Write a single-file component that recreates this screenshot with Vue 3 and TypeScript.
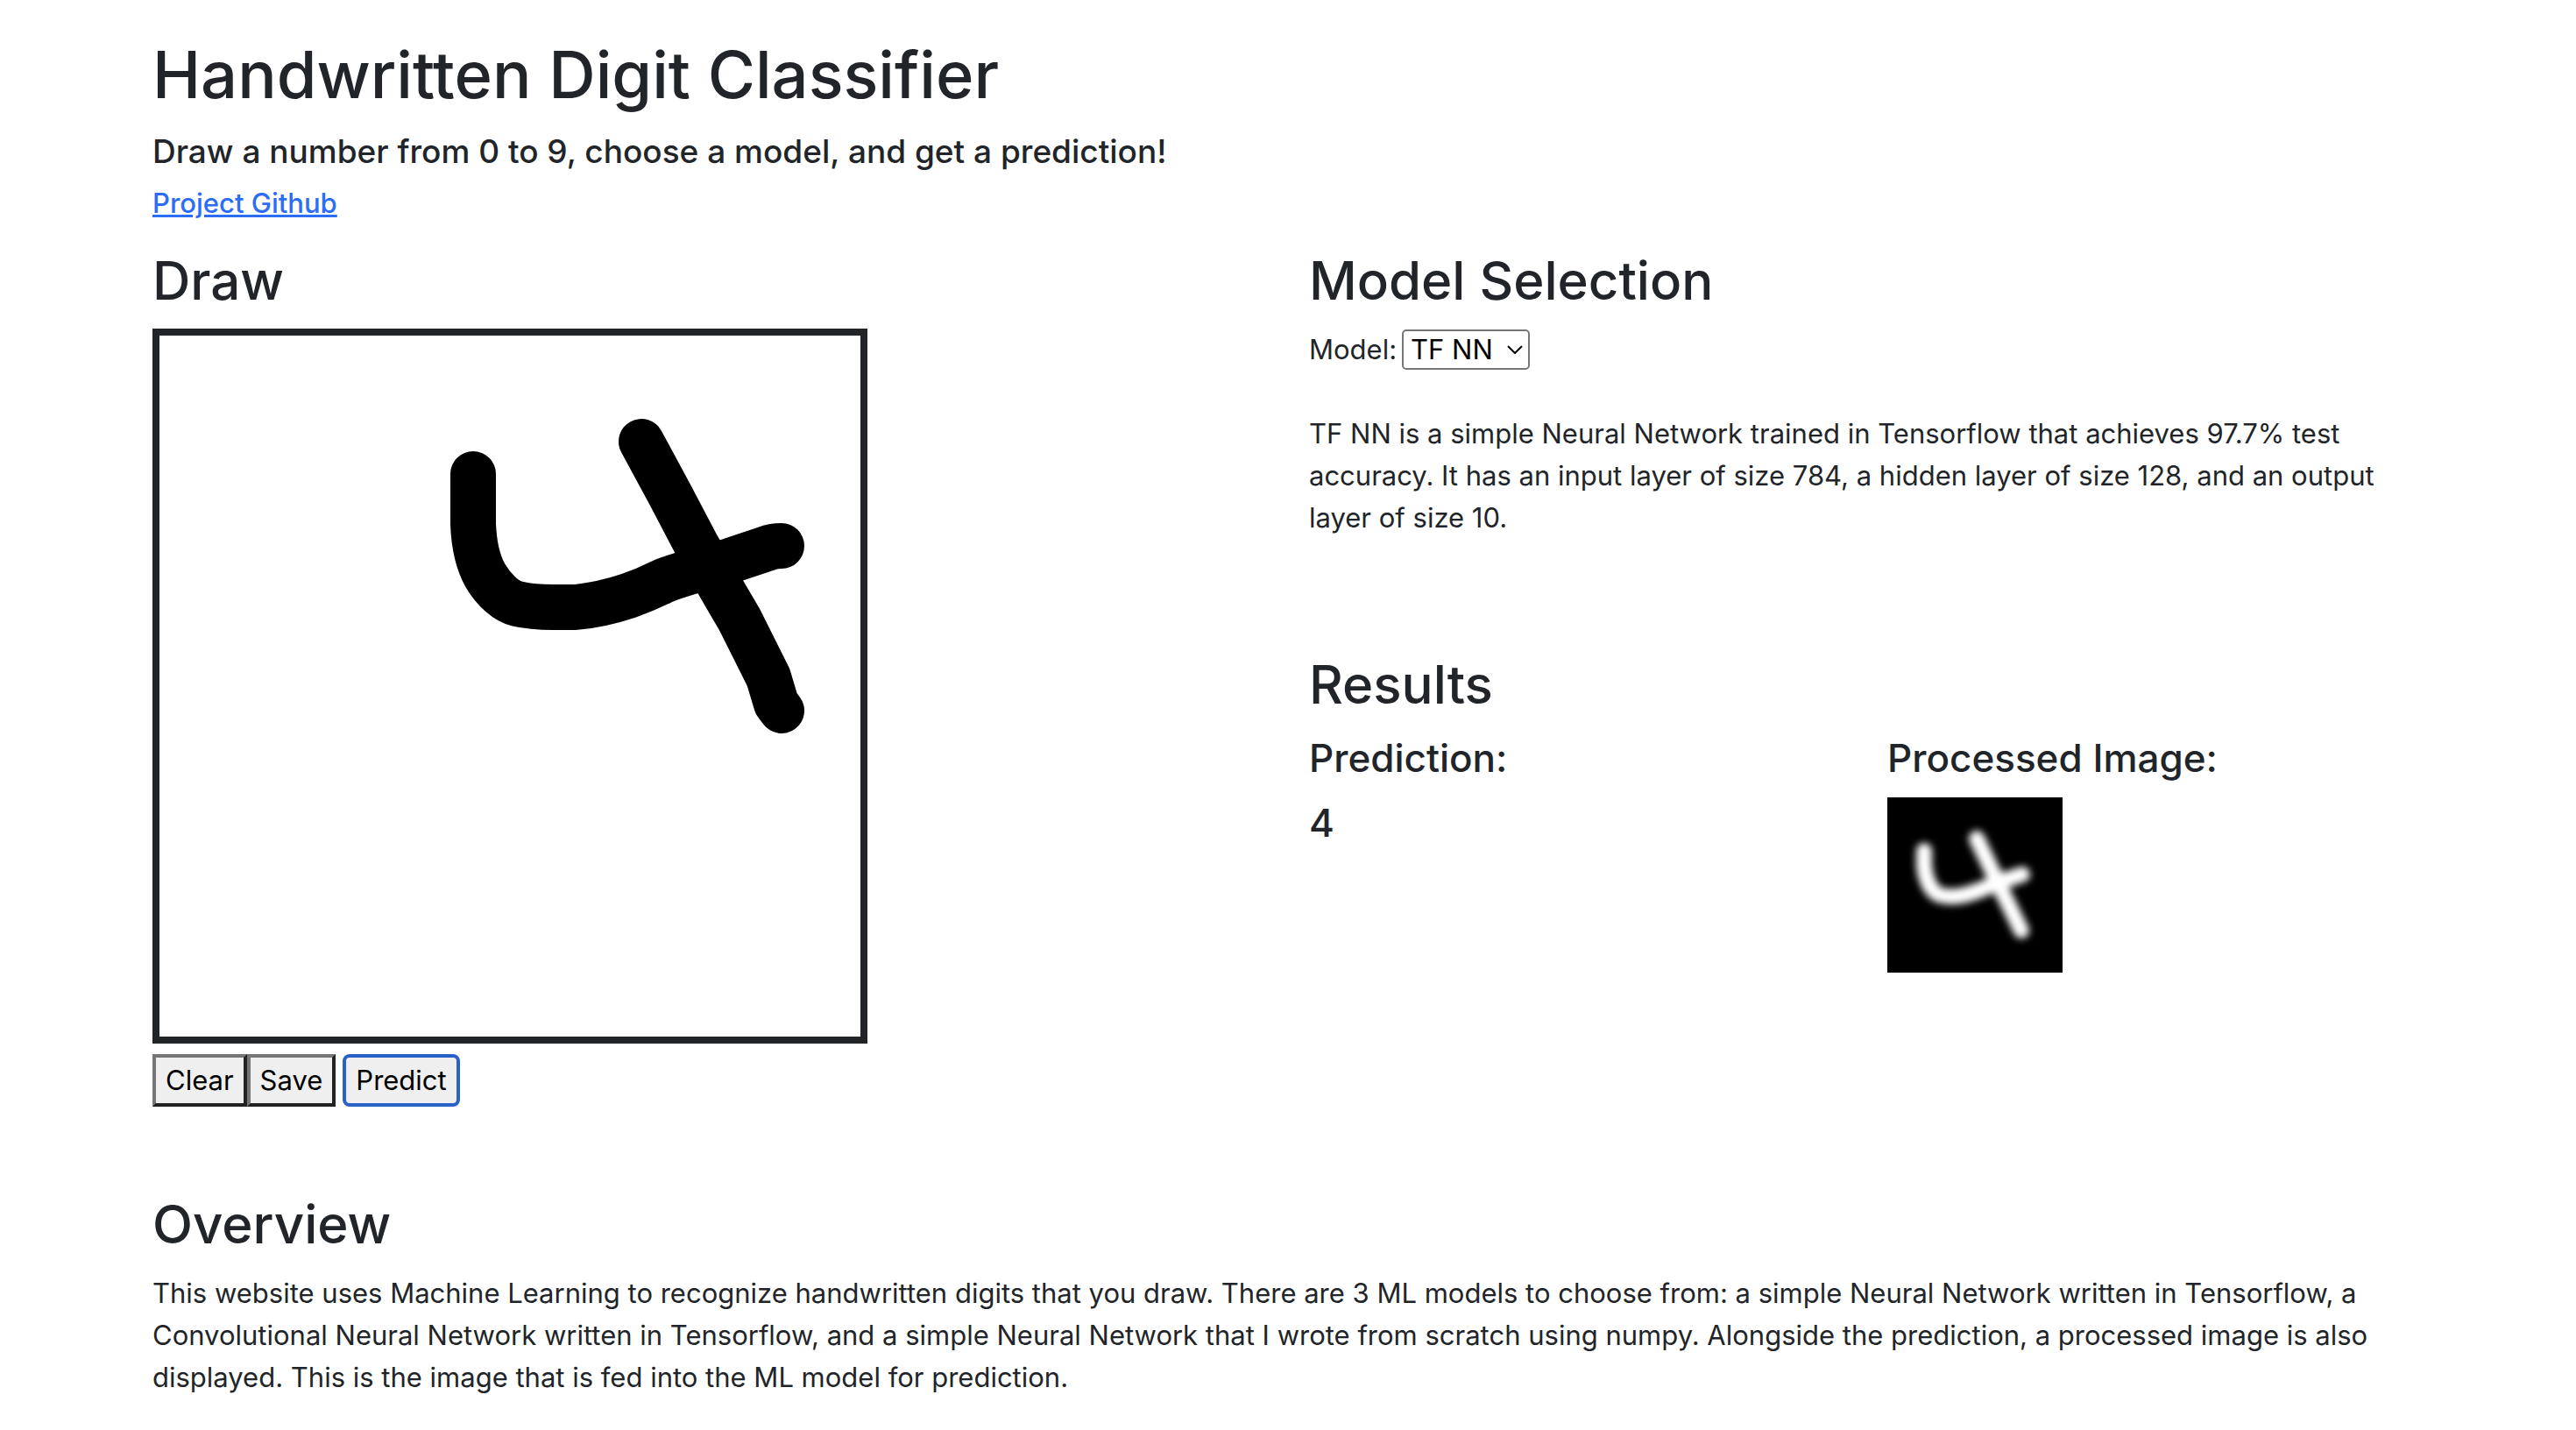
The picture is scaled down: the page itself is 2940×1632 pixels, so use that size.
<script setup lang="ts">
import { computed, ref } from 'vue'

interface Model {
  id: string
  name: string
  description: string
}

const models: Model[] = [
  {
    id: 'tf-nn',
    name: 'TF NN',
    description:
      'TF NN is a simple Neural Network trained in Tensorflow that achieves 97.7% test accuracy. It has an input layer of size 784, a hidden layer of size 128, and an output layer of size 10.',
  },
]

const selected = ref('tf-nn')
const description = computed(() => models.find((m) => m.id === selected.value)?.description ?? '')
const prediction = ref(4)

// Pen strokes in canvas coordinates
const strokes = ref<string[]>([
  'M358 158V215C359 240 364 260 372 274C382 291 396 303 408 306Q425 310 450 310H475Q505 307 535 297Q555 290 573 281Q588 274 651 257L693 243Q700 240 710 240',
  'M550 121L583 182L614 241L645 295L662 324L695 390L704 420L710 428',
])

const processed: string[] = [
  'M42 61V78Q44 98 54 108Q60 114 78 113Q94 112 126 97L154 88',
  'M102 47L126 97L153 152',
]

function clear(): void {
  strokes.value = []
}
</script>

<template>
  <main class="container">
    <header class="intro">
      <h1>Handwritten Digit Classifier</h1>
      <h5>Draw a number from 0 to 9, choose a model, and get a prediction!</h5>
      <h6><a href="#github">Project Github</a></h6>
    </header>

    <div class="row">
      <section class="col">
        <h2>Draw</h2>
        <svg class="canvas" viewBox="0 0 800 800" role="img" aria-label="Drawing area">
          <path v-for="(d, i) in strokes" :key="i" :d="d" />
        </svg>
        <div class="actions">
          <div class="pair">
            <button type="button" @click="clear">Clear</button>
            <button type="button">Save</button>
          </div>
          <button type="button" class="predict">Predict</button>
        </div>
      </section>

      <section class="col">
        <h2>Model Selection</h2>
        <div class="picker">
          <label for="model">Model:</label>
          <span class="select">
            <select id="model" v-model="selected">
              <option v-for="m in models" :key="m.id" :value="m.id">{{ m.name }}</option>
            </select>
            <svg class="chevron" viewBox="0 0 18 10" aria-hidden="true"><path d="M1 1L9 9L17 1" /></svg>
          </span>
        </div>
        <p class="description">{{ description }}</p>

        <h2>Results</h2>
        <div class="row">
          <div class="col">
            <h4>Prediction:</h4>
            <h4>{{ prediction }}</h4>
          </div>
          <div class="col">
            <h4>Processed Image:</h4>
            <svg class="processed" viewBox="0 0 200 200" role="img" aria-label="Processed image">
              <defs>
                <filter id="soften" x="0" y="0" width="200" height="200" filterUnits="userSpaceOnUse">
                  <feGaussianBlur stdDeviation="4" />
                </filter>
              </defs>
              <rect width="200" height="200" />
              <g filter="url(#soften)">
                <path v-for="d in processed" :key="d" :d="d" />
              </g>
            </svg>
          </div>
        </div>
      </section>
    </div>

    <section class="overview">
      <h2>Overview</h2>
      <p>
        This website uses Machine Learning to recognize handwritten digits that you draw. There are 3 ML models to
        choose from: a simple Neural Network written in Tensorflow, a Convolutional Neural Network written in
        Tensorflow, and a simple Neural Network that I wrote from scratch using numpy. Alongside the prediction, a
        processed image is also displayed. This is the image that is fed into the ML model for prediction.
      </p>
    </section>
  </main>
</template>

<style>
body {
  background: #fff;
}
</style>

<style scoped>
.container {
  box-sizing: border-box;
  max-width: 2640px;
  margin: 0 auto;
  padding: 37px 24px 24px;
  font-family: Inter, 'Liberation Sans', sans-serif;
  font-size: 31px;
  line-height: 48px;
  color: #212529;
}

h1,
h2,
h4,
h5,
h6 {
  margin: 0 0 16px;
  font-weight: 500;
}

h1 {
  font-size: 74px;
  line-height: 96px;
}

h2 {
  font-size: 60px;
  line-height: 77px;
}

h4 {
  font-size: 44px;
  line-height: 58px;
}

h5 {
  font-size: 37px;
  line-height: 48px;
}

h6 {
  font-size: 31px;
  line-height: 38px;
}

p {
  margin: 0;
}

a {
  color: #2b6df6;
  text-decoration: underline;
}

.intro {
  margin-bottom: 31px;
}

.intro h6 {
  margin-bottom: 0;
}

.row {
  display: flex;
  gap: 48px;
}

.col {
  flex: 1 1 0;
  min-width: 0;
}

.canvas {
  display: block;
  box-sizing: border-box;
  width: 816px;
  max-width: 100%;
  border: 8px solid #212529;
}

.canvas path {
  fill: none;
  stroke: #000;
  stroke-width: 52;
  stroke-linecap: round;
  stroke-linejoin: round;
}

.actions {
  display: flex;
  gap: 8px;
  margin-top: 12px;
}

.pair {
  display: flex;
}

button {
  box-sizing: border-box;
  height: 60px;
  padding: 0 11px;
  border: 4px solid;
  border-color: #767676 #212323 #212323 #767676;
  background: #efefef;
  font: inherit;
  color: #000;
}

.predict {
  border-color: #2961c8;
  border-radius: 8px;
}

.picker {
  display: flex;
  align-items: center;
  gap: 6px;
  height: 48px;
  margin-bottom: 48px;
}

.select {
  position: relative;
  display: flex;
}

select {
  appearance: none;
  box-sizing: border-box;
  height: 46px;
  padding: 0 40px 0 8px;
  border: 2px solid #767676;
  border-radius: 5px;
  background: #fff;
  font: inherit;
  line-height: 42px;
  color: #000;
}

.chevron {
  position: absolute;
  top: 18px;
  right: 8px;
  width: 18px;
  height: 10px;
  pointer-events: none;
  fill: none;
  stroke: #000;
  stroke-width: 2;
}

.description {
  margin-bottom: 128px;
}

.processed {
  display: block;
  width: 200px;
  height: 200px;
}

.processed path {
  fill: none;
  stroke: #fff;
  stroke-width: 18;
  stroke-linecap: round;
  stroke-linejoin: round;
}

.overview {
  margin-top: 96px;
}
</style>
